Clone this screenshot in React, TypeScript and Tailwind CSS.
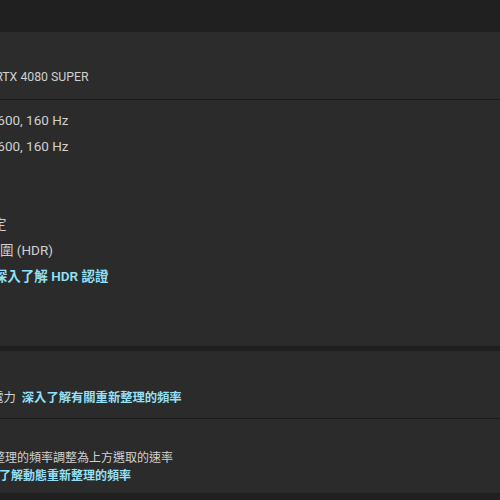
import React from 'react';

const font = {
  fontFamily: 'Roboto, "Noto Sans CJK TC", sans-serif',
};

export default function App() {
  return (
    <div
      className="w-[500px] h-[500px] overflow-hidden bg-[#202020] text-[#d0d0d0] flex flex-col"
      style={font}
    >
      <div className="h-[32px] shrink-0" />

      {/* Display header */}
      <div className="h-[68px] shrink-0 bg-[#2c2c2c] border-b border-[#1c1c1c] pt-[35px]">
        <div className="-ml-[96px] whitespace-nowrap text-[12.3px] leading-[20px]">
          NVIDIA GeForce RTX 4080 SUPER
        </div>
      </div>

      {/* Display info */}
      <div className="h-[246px] shrink-0 bg-[#2b2b2b] pt-[7px]">
        <div className="-ml-[54px] whitespace-nowrap text-[13.5px] leading-[26px]">
          <div>2560 x 1600, 160 Hz</div>
          <div>2560 x 1600, 160 Hz</div>
          <div>8 位元</div>
          <div>RGB</div>
          <div className="pl-[20px]">未指定</div>
          <div>高動態範圍 (HDR)</div>
          <div className="pl-[4px]">
            未認證 <a className="text-[#93e0fa] font-semibold">深入了解 HDR 認證</a>
          </div>
        </div>
      </div>

      <div className="h-[5px] shrink-0 bg-[#1f1f1f]" />

      {/* Refresh rate */}
      <div className="h-[68px] shrink-0 bg-[#2b2b2b] border-b border-[#1c1c1c] pt-[38px]">
        <div className="-ml-[58px] whitespace-nowrap text-[12.3px] leading-[18px]">
          <span>使用更多電力</span>
          <a className="ml-[6px] text-[#93e0fa] font-semibold">深入了解有關重新整理的頻率</a>
        </div>
      </div>

      {/* Dynamic refresh rate */}
      <div className="h-[74px] shrink-0 bg-[#2b2b2b] pt-[30px]">
        <div className="-ml-[7px] whitespace-nowrap text-[12px] leading-[18px]">
          整理的頻率調整為上方選取的速率
        </div>
        <div className="-ml-[25px] whitespace-nowrap text-[12px] leading-[18px]">
          <a className="text-[#93e0fa] font-semibold">深入了解動態重新整理的頻率</a>
        </div>
      </div>
    </div>
  );
}
